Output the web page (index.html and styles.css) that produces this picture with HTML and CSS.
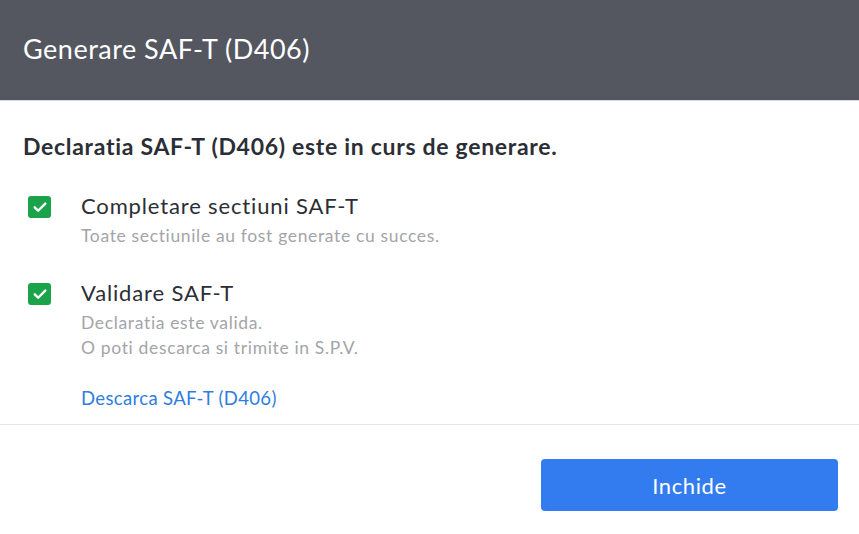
FILE: index.html
```html
<!DOCTYPE html>
<html lang="ro">
<head>
    <meta charset="UTF-8">
    <meta name="viewport" content="width=device-width, initial-scale=1.0">
    <title>Generare SAF-T (D406)</title>
    <link rel="stylesheet" href="styles.css">
</head>
<body>

    <div class="dialog">
        <div class="dialog-header">
            <h1>Generare SAF-T (D406)</h1>
        </div>

        <div class="dialog-body">
            <h2>Declaratia SAF-T (D406) este in curs de generare.</h2>

            <div class="step">
                <span class="check">
                    <svg viewBox="0 0 24 24" width="18" height="18">
                        <path d="M5 12.5l4.5 4.5L19 7.5" fill="none" stroke="#fff" stroke-width="3.2" stroke-linecap="round" stroke-linejoin="round"/>
                    </svg>
                </span>
                <div class="step-text">
                    <div class="step-title">Completare sectiuni SAF-T</div>
                    <div class="step-desc">Toate sectiunile au fost generate cu succes.</div>
                </div>
            </div>

            <div class="step">
                <span class="check">
                    <svg viewBox="0 0 24 24" width="18" height="18">
                        <path d="M5 12.5l4.5 4.5L19 7.5" fill="none" stroke="#fff" stroke-width="3.2" stroke-linecap="round" stroke-linejoin="round"/>
                    </svg>
                </span>
                <div class="step-text">
                    <div class="step-title">Validare SAF-T</div>
                    <div class="step-desc">Declaratia este valida.<br>O poti descarca si trimite in S.P.V.</div>
                    <a class="download" href="#">Descarca SAF-T (D406)</a>
                </div>
            </div>
        </div>

        <div class="dialog-footer">
            <button class="btn-close">Inchide</button>
        </div>
    </div>

</body>
</html>
```

FILE: styles.css
```css
body {
    margin: 0;
    font-family: Lato, "Open Sans", sans-serif;
    background: #ffffff;
}

.dialog {
    width: 859px;
    height: 534px;
    background: white;
}

.dialog-header {
    background-color: #545660;
    height: 101px;
    display: flex;
    align-items: center;
    padding: 0 23px;
    border-bottom: 1px solid #d9d9dc;
    box-sizing: border-box;
}

.dialog-header h1 {
    margin: 0;
    margin-top: -4px;
    color: white;
    font-size: 27px;
    font-weight: 400;
    letter-spacing: 0.5px;
}

.dialog-body {
    padding: 31px 23px 0 23px;
    height: 324px;
    box-sizing: border-box;
    border-bottom: 1px solid #e6e6e8;
}

.dialog-body h2 {
    margin: 0 0 32px 0;
    font-size: 23px;
    font-weight: 700;
    color: #2b2e35;
    line-height: 28px;
    letter-spacing: 0.7px;
}

.step {
    display: flex;
    align-items: flex-start;
    margin-bottom: 31px;
}

.check {
    width: 23px;
    height: 22px;
    margin: 4px 30px 0 5px;
    background: #1aa34a;
    border-radius: 3px;
    display: flex;
    align-items: center;
    justify-content: center;
    flex-shrink: 0;
}

.step-title {
    font-size: 22px;
    color: #2b2e35;
    line-height: 28px;
    letter-spacing: 0.85px;
}

.step-desc {
    font-size: 17.5px;
    color: #a3a5a9;
    line-height: 25px;
    margin-top: 3px;
    letter-spacing: 0.65px;
}

.download {
    display: inline-block;
    margin-top: 27px;
    font-size: 18.5px;
    color: #2f7de1;
    text-decoration: none;
    letter-spacing: 0.35px;
}

.dialog-footer {
    display: flex;
    justify-content: flex-end;
    padding: 34px 21px 0 0;
}

.btn-close {
    width: 297px;
    height: 52px;
    background-color: #337cf0;
    color: white;
    border: none;
    border-radius: 4px;
    font-family: Lato, "Open Sans", sans-serif;
    font-size: 22px;
    letter-spacing: 0.6px;
    cursor: pointer;
}
```
